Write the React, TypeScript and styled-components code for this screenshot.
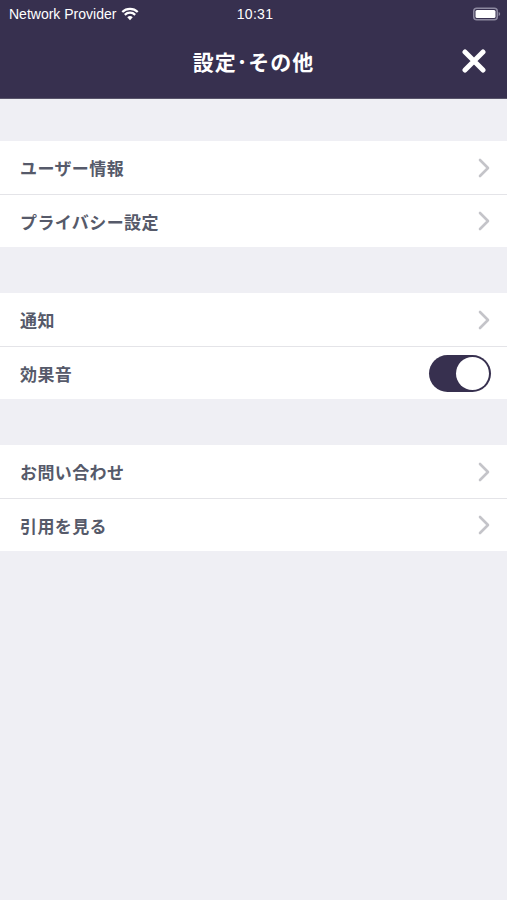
import * as React from 'react'
import styled, {createGlobalStyle} from 'styled-components'

const NAVY = '#37304f'
const TEXT = '#565a6a'

const GlobalStyle = createGlobalStyle`
  html, body {
    margin: 0;
    padding: 0;
    background: #efeff4;
  }
  body {
    font-family: "Noto Sans CJK JP", "Noto Sans", sans-serif;
  }
`

const Screen = styled.div`
  width: 507px;
  height: 900px;
  background: #efeff4;
  display: flex;
  flex-direction: column;
`

const Header = styled.header`
  background: ${NAVY};
  height: 98px;
  border-bottom: 1px solid #58546a;
  display: flex;
  flex-direction: column;
`

const StatusBar = styled.div`
  height: 28px;
  padding: 0 6px 0 9px;
  display: grid;
  grid-template-columns: 1fr auto 1fr;
  align-items: center;
  color: #ffffff;
  font-family: "Liberation Sans", Arial, sans-serif;
  font-size: 14px;
`

const Carrier = styled.div`
  display: flex;
  align-items: center;
  gap: 5px;
`

const Clock = styled.div`
  font-size: 14px;
  letter-spacing: 0.3px;
`

const BatteryWrap = styled.div`
  display: flex;
  justify-content: flex-end;
  align-items: center;
`

const NavBar = styled.div`
  flex: 1;
  display: grid;
  grid-template-columns: 60px 1fr 60px;
  align-items: center;
  padding-bottom: 4px;
`

const Title = styled.h1`
  margin: 0;
  text-align: center;
  color: #ffffff;
  font-size: 21px;
  font-weight: 700;
  letter-spacing: 1px;
`

const CloseButton = styled.button`
  background: none;
  border: 0;
  padding: 0;
  justify-self: end;
  margin-right: 20px;
  width: 26px;
  height: 26px;
  display: flex;
  align-items: center;
  justify-content: center;
  cursor: pointer;
`

const Group = styled.section<{$gap: number}>`
  margin-top: ${p => p.$gap}px;
  background: #ffffff;
  display: flex;
  flex-direction: column;
`

const Row = styled.div`
  height: 53px;
  padding: 0 17px 0 20px;
  display: flex;
  align-items: center;
  justify-content: space-between;
  box-sizing: border-box;
  & + & {
    border-top: 1px solid #e4e4e8;
  }
`

const Label = styled.span`
  color: ${TEXT};
  font-size: 17px;
  font-weight: 700;
  letter-spacing: 0.4px;
`

const Toggle = styled.div`
  width: 62px;
  height: 37px;
  border-radius: 19px;
  background: ${NAVY};
  display: flex;
  align-items: center;
  justify-content: flex-end;
  padding: 2px;
  box-sizing: border-box;
  margin-right: -1px;
`

const Knob = styled.div`
  width: 33px;
  height: 33px;
  border-radius: 50%;
  background: #ffffff;
`

const Wifi = () => (
  <svg width="18" height="14" viewBox="0 0 17 13">
    <path d="M8.5 12.5 L5.9 9.6 A3.8 3.8 0 0 1 11.1 9.6 Z" fill="#fff" />
    <path d="M3.6 7.3 A7 7 0 0 1 13.4 7.3" stroke="#fff" strokeWidth="2.1" fill="none" />
    <path d="M1.2 4.6 A10.5 10.5 0 0 1 15.8 4.6" stroke="#fff" strokeWidth="2.1" fill="none" />
  </svg>
)

const Battery = () => (
  <svg width="28" height="14" viewBox="0 0 28 14">
    <rect x="0.75" y="1.25" width="23.5" height="11.5" rx="3" fill="none" stroke="#8d89a0" strokeWidth="1.5" />
    <rect x="2.5" y="3" width="20" height="8" rx="1.5" fill="#fff" />
    <path d="M25.6 5 Q27.2 5.5 27.2 7 Q27.2 8.5 25.6 9 Z" fill="#8d89a0" />
  </svg>
)

const CloseIcon = () => (
  <svg width="24" height="24" viewBox="0 0 24 24">
    <path d="M3 3 L21 21 M21 3 L3 21" stroke="#fff" strokeWidth="5" strokeLinecap="round" />
  </svg>
)

const Chevron = () => (
  <svg width="12" height="20" viewBox="0 0 12 20">
    <path d="M2 2 L10 10 L2 18" stroke="#c4c4c9" strokeWidth="2.6" fill="none" strokeLinecap="round" strokeLinejoin="round" />
  </svg>
)

interface Item {
  label: string
  toggle?: boolean
}

const groups: Item[][] = [
  [{label: 'ユーザー情報'}, {label: 'プライバシー設定'}],
  [{label: '通知'}, {label: '効果音', toggle: true}],
  [{label: 'お問い合わせ'}, {label: '引用を見る'}],
]

export default function App() {
  return (
    <Screen>
      <GlobalStyle />
      <Header>
        <StatusBar>
          <Carrier>
            Network Provider
            <Wifi />
          </Carrier>
          <Clock>10:31</Clock>
          <BatteryWrap>
            <Battery />
          </BatteryWrap>
        </StatusBar>
        <NavBar>
          <div />
          <Title>設定･その他</Title>
          <CloseButton aria-label="close">
            <CloseIcon />
          </CloseButton>
        </NavBar>
      </Header>
      {groups.map((items, i) => (
        <Group key={i} $gap={i === 0 ? 42 : 46}>
          {items.map(item => (
            <Row key={item.label}>
              <Label>{item.label}</Label>
              {item.toggle ? (
                <Toggle>
                  <Knob />
                </Toggle>
              ) : (
                <Chevron />
              )}
            </Row>
          ))}
        </Group>
      ))}
    </Screen>
  )
}
